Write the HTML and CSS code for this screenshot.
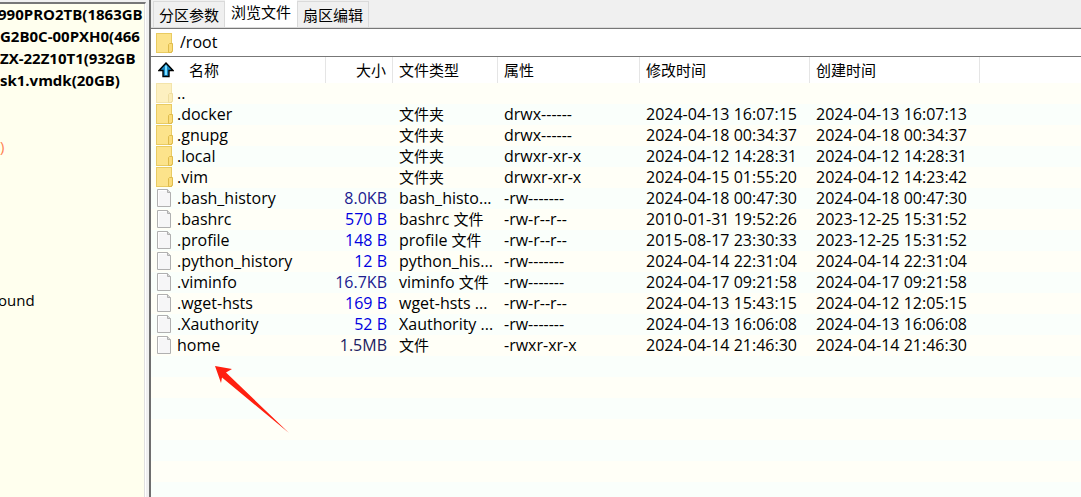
FILE: index.html
```html
<!DOCTYPE html>
<html lang="zh-CN">
<head>
<meta charset="utf-8">
<title>/root</title>
<link rel="stylesheet" href="styles.css">
</head>
<body>
<svg class="defs" aria-hidden="true">
  <symbol id="folder" viewBox="0 0 17 20">
    <rect x="0.5" y="0.5" width="15" height="19" fill="#fce38b" stroke="#e9cb62"/>
    <path d="M16.5 10.5V18.5H15.5V19.5H12.5V11.5L13.5 10.5Z" fill="#fbdc7a" stroke="#dfbc4c"/>
  </symbol>
  <symbol id="file" viewBox="0 0 17 20">
    <path d="M1.5 1.5H11.5L14.5 4.5V18.5H1.5Z" fill="#f6f6f7" stroke="#b0b0b0"/>
    <path d="M2.5 17.5V2.5H10.5" fill="none" stroke="#fff"/>
    <path d="M11.5 1.5V4.5H14.5" fill="#d8d8d8" stroke="#b0b0b0"/>
  </symbol>
</svg>
<div class="app">
  <aside class="side">
    <ul class="tree">
      <li class="disk lead">990PRO2TB(1863GB</li>
      <li class="disk">G2B0C-00PXH0(466</li>
      <li class="disk">ZX-22Z10T1(932GB</li>
      <li class="disk">sk1.vmdk(20GB)</li>
      <li></li><li></li>
      <li class="part">)</li>
      <li></li><li></li><li></li><li></li><li></li><li></li>
      <li class="lead">ound</li>
    </ul>
  </aside>
  <main class="main">
    <nav class="tabs cjk">
      <button type="button" class="tab">分区参数</button>
      <button type="button" class="tab active">浏览文件</button>
      <button type="button" class="tab">扇区编辑</button>
    </nav>
    <div class="path">
      <svg class="icon"><use href="#folder"/></svg>
      <input type="text" value="/root" aria-label="路径">
    </div>
    <div class="list">
      <table>
        <colgroup><col class="c-name"><col class="c-size"><col class="c-type"><col class="c-attr"><col class="c-time"><col class="c-time"><col></colgroup>
        <thead class="cjk">
          <tr>
            <th><span class="name up"><svg class="arrow" viewBox="0 0 16 16"><path d="M8 1L15 8.5H11V14.5H5V8.5H1Z" fill="#1687c4" stroke="#000" stroke-width="1.4"/><path d="M8 3.5V13" stroke="#7fe0ff" stroke-width="2"/></svg>名称</span></th>
            <th class="size">大小</th><th>文件类型</th><th>属性</th><th>修改时间</th><th>创建时间</th><th></th>
          </tr>
        </thead>
        <tbody>
          <tr><td><span class="name"><svg class="icon faded"><use href="#folder"/></svg>..</span></td><td></td><td></td><td></td><td></td><td></td><td></td></tr>
          <tr><td><span class="name"><svg class="icon"><use href="#folder"/></svg>.docker</span></td><td></td><td><span class="cjk">文件夹</span></td><td>drwx------</td><td>2024-04-13 16:07:15</td><td>2024-04-13 16:07:13</td><td></td></tr>
          <tr><td><span class="name"><svg class="icon"><use href="#folder"/></svg>.gnupg</span></td><td></td><td><span class="cjk">文件夹</span></td><td>drwx------</td><td>2024-04-18 00:34:37</td><td>2024-04-18 00:34:37</td><td></td></tr>
          <tr><td><span class="name"><svg class="icon"><use href="#folder"/></svg>.local</span></td><td></td><td><span class="cjk">文件夹</span></td><td>drwxr-xr-x</td><td>2024-04-12 14:28:31</td><td>2024-04-12 14:28:31</td><td></td></tr>
          <tr><td><span class="name"><svg class="icon"><use href="#folder"/></svg>.vim</span></td><td></td><td><span class="cjk">文件夹</span></td><td>drwxr-xr-x</td><td>2024-04-15 01:55:20</td><td>2024-04-12 14:23:42</td><td></td></tr>
          <tr><td><span class="name"><svg class="icon"><use href="#file"/></svg>.bash_history</span></td><td class="size kb">8.0KB</td><td>bash_histo...</td><td>-rw-------</td><td>2024-04-18 00:47:30</td><td>2024-04-18 00:47:30</td><td></td></tr>
          <tr><td><span class="name"><svg class="icon"><use href="#file"/></svg>.bashrc</span></td><td class="size b">570 B</td><td>bashrc <span class="cjk">文件</span></td><td>-rw-r--r--</td><td>2010-01-31 19:52:26</td><td>2023-12-25 15:31:52</td><td></td></tr>
          <tr><td><span class="name"><svg class="icon"><use href="#file"/></svg>.profile</span></td><td class="size b">148 B</td><td>profile <span class="cjk">文件</span></td><td>-rw-r--r--</td><td>2015-08-17 23:30:33</td><td>2023-12-25 15:31:52</td><td></td></tr>
          <tr><td><span class="name"><svg class="icon"><use href="#file"/></svg>.python_history</span></td><td class="size b">12 B</td><td>python_his...</td><td>-rw-------</td><td>2024-04-14 22:31:04</td><td>2024-04-14 22:31:04</td><td></td></tr>
          <tr><td><span class="name"><svg class="icon"><use href="#file"/></svg>.viminfo</span></td><td class="size kb">16.7KB</td><td>viminfo <span class="cjk">文件</span></td><td>-rw-------</td><td>2024-04-17 09:21:58</td><td>2024-04-17 09:21:58</td><td></td></tr>
          <tr><td><span class="name"><svg class="icon"><use href="#file"/></svg>.wget-hsts</span></td><td class="size b">169 B</td><td>wget-hsts ...</td><td>-rw-r--r--</td><td>2024-04-13 15:43:15</td><td>2024-04-12 12:05:15</td><td></td></tr>
          <tr><td><span class="name"><svg class="icon"><use href="#file"/></svg>.Xauthority</span></td><td class="size b">52 B</td><td>Xauthority ...</td><td>-rw-------</td><td>2024-04-13 16:06:08</td><td>2024-04-13 16:06:08</td><td></td></tr>
          <tr><td><span class="name"><svg class="icon"><use href="#file"/></svg>home</span></td><td class="size mb">1.5MB</td><td><span class="cjk">文件</span></td><td>-rwxr-xr-x</td><td>2024-04-14 21:46:30</td><td>2024-04-14 21:46:30</td><td></td></tr>
        </tbody>
      </table>
      <svg class="pointer" viewBox="0 0 76 68" aria-hidden="true"><path d="M0 0L17 3L11 6.500L74 67L7 11.500L6 17Z" fill="#ff2010"/></svg>
    </div>
  </main>
</div>
</body>
</html>
```

FILE: styles.css
```css
* { box-sizing: border-box; }
body {
  margin: 0;
  font: 16px/21px "Open Sans", "Noto Sans CJK SC", sans-serif;
  color: #000;
  background: #f0f0f0;
}
.defs { display: none; }
.cjk { font-family: "Noto Sans CJK SC", sans-serif; font-size: 15px; line-height: 18px; }
.app { display: flex; height: 100vh; overflow: hidden; }
.side {
  flex: 0 0 146px;
  min-width: 0;
  margin-top: 2px;
  border-top: 2px solid #777;
  border-right: 1px solid #fff;
  box-shadow: inset -1px 0 #e0e0e0;
  background: #ffffee;
  padding-right: 1px;
}
.tree { list-style: none; margin: 0; padding: 0; overflow: hidden; }
.tree li { height: 22px; line-height: 20px; font-size: 15px; white-space: nowrap; }
.tree .disk { font-weight: 700; }
.tree .lead { text-indent: -2px; }
.tree .part { color: #ff7f50; }
.main {
  flex: 1;
  min-width: 0;
  margin-left: 3px;
  border-left: 2px solid #6e6e6e;
  display: flex;
  flex-direction: column;
}
.tabs {
  display: flex;
  align-items: flex-end;
  height: 28px;
  padding-left: 2px;
  border-bottom: 1px solid #dadada;
}
.tab {
  height: 26px;
  padding: 0 5px;
  border: 1px solid #dadada;
  border-bottom: 0;
  background: #f0f0f0;
  font: inherit;
  color: inherit;
}
.tab.active {
  height: 28px;
  padding: 0 6px 2px;
  border: 0;
  background: #fff;
}
.path {
  display: flex;
  align-items: center;
  gap: 7px;
  height: 29px;
  padding-left: 5px;
  border: 1px solid #777;
  border-right: 0;
  border-left: 0;
  background: #fff;
}
.path input {
  flex: 1;
  min-width: 0;
  border: 0;
  padding: 0;
  outline: 0;
  background: none;
  font: inherit;
}
.icon { flex: none; width: 17px; height: 20px; }
.faded { opacity: .5; }
.list {
  position: relative;
  flex: 1;
  background: repeating-linear-gradient(#fffff7 0 21px, #fafffb 21px 42px) 0 26px;
}
table { width: 100%; table-layout: fixed; border-collapse: separate; border-spacing: 0; }
.c-name { width: 175px; }
.c-size { width: 67px; }
.c-type { width: 105px; }
.c-attr { width: 142px; }
.c-time { width: 170px; }
th {
  height: 26px;
  padding: 0 5px 0 6px;
  border-right: 1px solid #e5e5e5;
  background: #fff;
  font-weight: 400;
  text-align: left;
}
th:last-child { border: 0; }
td { height: 21px; padding: 0 0 0 6px; white-space: nowrap; line-height: 20px; vertical-align: top; }
th:first-child, td:first-child { padding-left: 5px; }
.name { display: flex; align-items: center; gap: 4px; }
.up { gap: 15px; padding-left: 2px; }
.arrow { width: 16px; height: 16px; }
th.size, td.size { text-align: right; padding-right: 6px; }
.kb { color: #202090; }
.b { color: #0000e0; }
.mb { color: #202060; }
.pointer { position: absolute; left: 64px; top: 309px; width: 76px; height: 68px; }
```
